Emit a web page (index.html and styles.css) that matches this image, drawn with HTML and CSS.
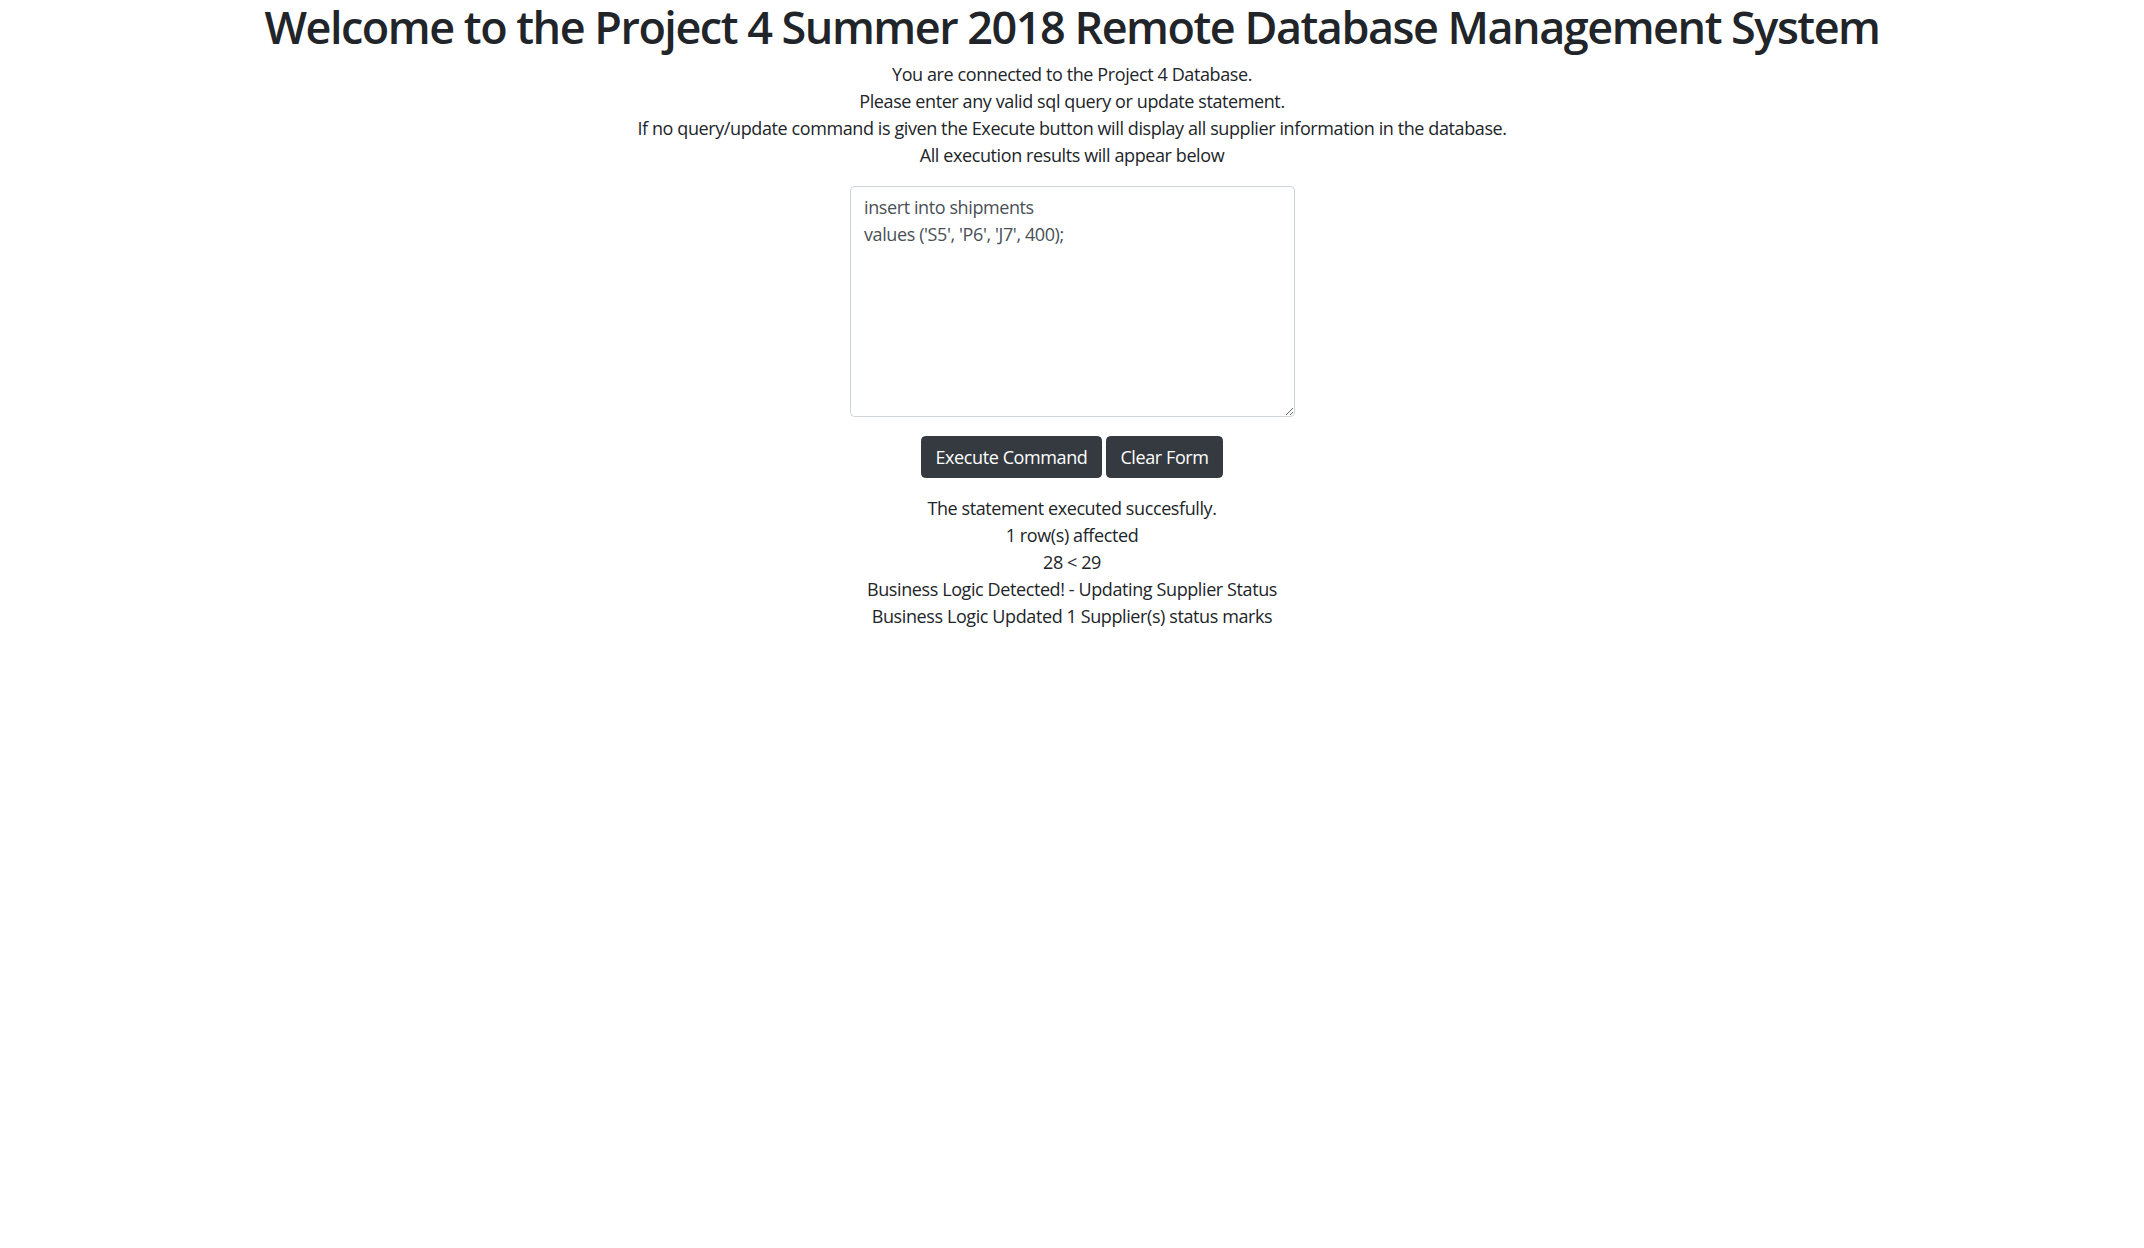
FILE: index.html
```html
<!DOCTYPE html>
<html lang="en">
<head>
<meta charset="utf-8">
<title>Project 4 Remote Database Management System</title>
<link rel="stylesheet" href="styles.css">
</head>
<body>
<main class="page">
  <h1 class="title">Welcome to the Project 4 Summer 2018 Remote Database Management System</h1>
  <p class="intro">You are connected to the Project 4 Database.<br>Please enter any valid sql query or update statement.<br>If no query/update command is given the Execute button will display all supplier information in the database.<br>All execution results will appear below</p>
  <form class="cmd-form">
    <textarea class="cmd-input" name="sql">insert into shipments
values ('S5', 'P6', 'J7', 400);</textarea>
    <div class="actions">
      <button type="button" class="btn">Execute Command</button>
      <button type="button" class="btn">Clear Form</button>
    </div>
  </form>
  <div class="results">
    <div>The statement executed succesfully.</div>
    <div>1 row(s) affected</div>
    <div>28 &lt; 29</div>
    <div>Business Logic Detected! - Updating Supplier Status</div>
    <div>Business Logic Updated 1 Supplier(s) status marks</div>
  </div>
</main>
</body>
</html>
```
FILE: styles.css
```css
html, body {
  margin: 0;
  padding: 0;
  background: #ffffff;
}
body {
  font-family: "Open Sans", "Noto Sans", "Liberation Sans", sans-serif;
  font-size: 18px;
  line-height: 27px;
  letter-spacing: -0.4px;
  color: #212529;
}
.page {
  display: flex;
  flex-direction: column;
  align-items: center;
  text-align: center;
}
.title {
  margin: 0 0 7px 0;
  font-size: 45px;
  line-height: 54px;
  font-weight: 600;
  letter-spacing: -1.5px;
  color: #212529;
}
.intro {
  margin: 0 0 17px 0;
}
.cmd-form {
  display: flex;
  flex-direction: column;
  align-items: center;
}
.cmd-input {
  box-sizing: border-box;
  width: 445px;
  height: 231px;
  padding: 6.75px 13.5px;
  border: 1px solid #ced4da;
  border-radius: 4.5px;
  font-family: inherit;
  font-size: 18px;
  line-height: 27px;
  letter-spacing: -0.4px;
  color: #495057;
  background: #fff;
  margin: 0;
}
.actions {
  display: flex;
  gap: 4px;
  margin-top: 19px;
}
.btn {
  box-sizing: border-box;
  height: 42px;
  padding: 0 13.5px;
  border: 1px solid #343a40;
  border-radius: 4.5px;
  background: #343a40;
  color: #fff;
  font-family: inherit;
  font-size: 18px;
  line-height: 27px;
  letter-spacing: -0.4px;
}
.results {
  margin-top: 17px;
}
```
